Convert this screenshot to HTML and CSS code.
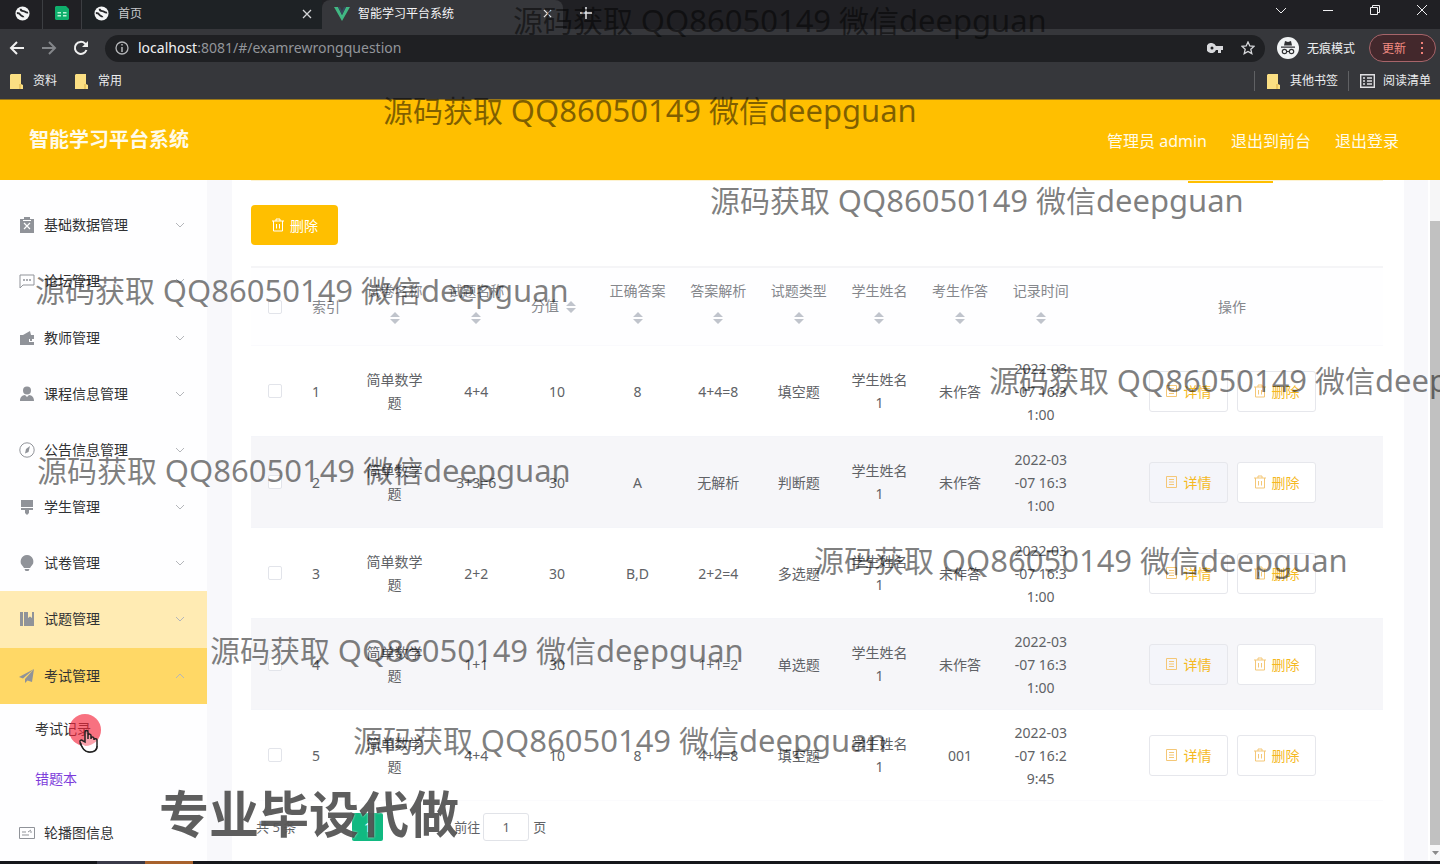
FILE: index.html
```html
<!DOCTYPE html>
<html lang="zh-CN">
<head>
<meta charset="utf-8">
<title>智能学习平台系统</title>
<link rel="stylesheet" href="styles.css">
</head>
<body>
<svg class="defs" aria-hidden="true">
  <symbol id="globe" viewBox="0 0 16 16"><circle cx="8" cy="8" r="7.500" fill="#f4f5f6"/><path d="M2 7.500c2 0 3 .5 4 2s3 1 3 2.500M6 3c0 2 1 2.500 3 2.500s2 2 5 1.500" fill="none" stroke="#28292c" stroke-width="2"/></symbol>
  <symbol id="folder" viewBox="0 0 13 15"><path d="M1 0h10v10l2 1v4H0V1z" fill="#fbdf83"/><path d="M10 10v5" stroke="#d9ad41"/></symbol>
  <symbol id="trash" viewBox="0 0 14 14"><path d="M1 3h12M5 3V1h4v2M2.500 3v10h9V3M5.500 6v4.500M8.500 6v4.500" fill="none" stroke="currentColor"/></symbol>
  <symbol id="doc" viewBox="0 0 14 14"><path d="M1.500 1.500h10v11h-10zM4 4.500h5M4 7h5M4 9.500h5" fill="none" stroke="currentColor"/></symbol>
  <symbol id="down" viewBox="0 0 10 10"><path d="M1 3l4 4 4-4" fill="none" stroke="currentColor"/></symbol>
  <symbol id="sort" viewBox="0 0 10 12"><path d="M0 5l5-5 5 5zM0 7l5 5 5-5z" fill="#c0c4cc"/></symbol>
</svg>

<div class="browser">
  <div class="tabs">
    <div class="pinned"><svg width="15" height="15"><use href="#globe"/></svg></div>
    <div class="pinned"><svg width="14" height="14" viewBox="0 0 14 14"><path d="M1 0h10l3 3v10l-1 1H1L0 13V1z" fill="#0fae6c"/><path d="M2.500 6h3.500v1.500H2.500zM8 6h3.500v1.500H8zM2.500 9h3.500v1.500H2.500zM8 9h3.500v1.500H8z" fill="#b9f3d6"/></svg></div>
    <div class="tab"><svg width="15" height="15"><use href="#globe"/></svg><span>首页</span><button class="plain" aria-label="关闭首页"><svg width="10" height="10" viewBox="0 0 10 10"><path d="M1 1l8 8M9 1L1 9" stroke="#d5d6d8" stroke-width="1.300"/></svg></button></div>
    <div class="tab current"><svg width="16" height="14" viewBox="0 0 16 14"><path d="M0 0h4l4 8 4-8h4L8 14z" fill="#41b883"/><path d="M4 0h2l2 4 2-4h2L8 8z" fill="#35495e"/></svg><span>智能学习平台系统</span><button class="plain" aria-label="关闭标签"><svg width="9" height="9" viewBox="0 0 10 10"><path d="M1 1l8 8M9 1L1 9" stroke="#e8e8ea" stroke-width="1.300"/></svg></button></div>
    <button class="plain add" aria-label="新标签"><svg width="12" height="12" viewBox="0 0 12 12"><path d="M6 0v12M0 6h12" stroke="#e8e8ea" stroke-width="1.500"/></svg></button>
    <div class="window">
      <svg width="12" height="12" viewBox="0 0 12 12"><path d="M1 4l5 5 5-5"/></svg>
      <svg width="12" height="12" viewBox="0 0 12 12"><path d="M1 6.500h10"/></svg>
      <svg width="12" height="12" viewBox="0 0 12 12"><path d="M1.500 3.500h7v7h-7zM3.500 3.500v-2h7v7h-2"/></svg>
      <svg width="12" height="12" viewBox="0 0 12 12"><path d="M1 1l10 10M11 1L1 11"/></svg>
    </div>
  </div>
  <div class="toolbar">
    <button class="plain" aria-label="后退"><svg width="16" height="14" viewBox="0 0 16 14"><path d="M8 1L2 7l6 6M2 7h13" fill="none" stroke="#f0f0f0" stroke-width="2"/></svg></button>
    <button class="plain" aria-label="前进"><svg width="16" height="14" viewBox="0 0 16 14"><path d="M8 1l6 6-6 6M14 7H1" fill="none" stroke="#84868a" stroke-width="2"/></svg></button>
    <button class="plain" aria-label="刷新"><svg width="16" height="16" viewBox="0 0 16 16"><path d="M13.500 10A6 6 0 1 1 12 3.500L14 5.500" fill="none" stroke="#f0f0f0" stroke-width="2"/><path d="M15 1v6H9z" fill="#f0f0f0"/></svg></button>
    <div class="address">
      <svg width="14" height="14" viewBox="0 0 14 14"><circle cx="7" cy="7" r="6" fill="none" stroke="#b5b6b9" stroke-width="1.300"/><path d="M7 6v5M7 3v1.500" stroke="#b5b6b9" stroke-width="1.500"/></svg>
      <span class="url"><b>localhost</b>:8081/#/examrewrongquestion</span>
      <svg width="16" height="10" viewBox="0 0 16 10"><path d="M5 0a5 5 0 1 0 4 7h2v3h3V7h2V3H9A5 5 0 0 0 5 0zm0 3.500a1.500 1.500 0 1 1 0 3 1.500 1.500 0 0 1 0-3z" fill="#d8d9dc"/></svg>
      <svg width="14" height="14" viewBox="0 0 14 14"><path d="M7 1l1.800 4 4.200.4-3.200 2.900 1 4.300L7 10.400l-3.800 2.200 1-4.300L1 5.400 5.200 5z" fill="none" stroke="#d8d9dc" stroke-width="1.300"/></svg>
    </div>
    <div class="incognito"><svg width="22" height="22" viewBox="0 0 22 22"><circle cx="11" cy="11" r="11" fill="#f1f3f4"/><path d="M7 8.500L8 4l3 1 3-1 1 4.500zM4 9.500h14v1.200H4z" fill="#303134"/><path d="M9.500 14.500h3" stroke="#303134"/><circle cx="7.500" cy="14.500" r="2.200" fill="none" stroke="#303134" stroke-width="1.200"/><circle cx="14.500" cy="14.500" r="2.200" fill="none" stroke="#303134" stroke-width="1.200"/></svg><span>无痕模式</span></div>
    <button class="update">更新<svg width="4" height="14" viewBox="0 0 4 14"><path d="M1 1h2v2H1zM1 6h2v2H1zM1 11h2v2H1z" fill="#f08078"/></svg></button>
  </div>
  <div class="bookmarks">
    <a href="#"><svg width="13" height="15"><use href="#folder"/></svg>资料</a>
    <a href="#"><svg width="13" height="15"><use href="#folder"/></svg>常用</a>
    <a href="#" class="others"><svg width="13" height="15"><use href="#folder"/></svg>其他书签</a>
    <a href="#" class="reading"><svg width="15" height="14" viewBox="0 0 15 14"><path d="M.7.700h13.600v12.600H.7zM3 4h2M3 7h2M3 10h2M7 4h5M7 7h5M7 10h5" fill="none" stroke="#e0e0e3" stroke-width="1.400"/></svg>阅读清单</a>
  </div>
</div>

<header class="header">
  <h1>智能学习平台系统</h1>
  <span>管理员 admin</span>
  <a href="#">退出到前台</a>
  <a href="#">退出登录</a>
</header>

<div class="app">
  <nav class="side">
    <ul class="groups">
      <li><svg viewBox="0 0 16 16"><path d="M1 2h14v14H1zM5 0h6v3H5z" fill="#909399"/><path d="M4 3.500h8M5 6l6 6M11 6l-6 6" stroke="#fff" stroke-width="1.200"/></svg><a href="#">基础数据管理</a><svg class="arrow"><use href="#down"/></svg></li>
      <li><svg viewBox="0 0 16 16"><path d="M1 2h14v10H4l-3 3z" fill="none" stroke="#909399"/><path d="M4 7h2M7 7h2M10 7h2" stroke="#909399" stroke-width="1.500"/></svg><a href="#">论坛管理</a><svg class="arrow"><use href="#down"/></svg></li>
      <li><svg viewBox="0 0 16 16"><path d="M1 5h3l7-4 1 4h3v4h-5v3h5v3H1z" fill="#909399"/><path d="M11 10h2" stroke="#909399" stroke-width="2"/></svg><a href="#">教师管理</a><svg class="arrow"><use href="#down"/></svg></li>
      <li><svg viewBox="0 0 16 16"><circle cx="8" cy="4.500" r="4" fill="#909399"/><path d="M1 15c0-4 2-5.500 5-6l2 2 2-2c3 .5 5 2 5 6z" fill="#909399"/></svg><a href="#">课程信息管理</a><svg class="arrow"><use href="#down"/></svg></li>
      <li><svg viewBox="0 0 16 16"><circle cx="8" cy="8" r="7.200" fill="none" stroke="#909399"/><path d="M11 4L9.500 10 6 11.500 7 7z" fill="#909399"/></svg><a href="#">公告信息管理</a><svg class="arrow"><use href="#down"/></svg></li>
      <li><svg viewBox="0 0 16 16"><path d="M2 1h12v7H2zM2 9h12v2h-4v3l-2 2-2-2v-3H2z" fill="#909399"/></svg><a href="#">学生管理</a><svg class="arrow"><use href="#down"/></svg></li>
      <li><svg viewBox="0 0 16 16"><path d="M8 0a6.500 6.500 0 0 1 4 11.500L11 13H5l-1-1.500A6.500 6.500 0 0 1 8 0zM5.500 14h5l-1 2h-3z" fill="#909399"/></svg><a href="#">试卷管理</a><svg class="arrow"><use href="#down"/></svg></li>
      <li class="hover"><svg viewBox="0 0 16 16"><path d="M1 1h3v14H1zM5 1h4v6l2-1.500L13 7V1h2v14H5z" fill="#909399"/></svg><a href="#">试题管理</a><svg class="arrow"><use href="#down"/></svg></li>
      <li class="open"><svg viewBox="0 0 16 16"><path d="M15 1L0 9l4 1.500zM15 1L6 11v4l2.500-2.500L13 14z" fill="#909399"/></svg><a href="#">考试管理</a><svg class="arrow up"><use href="#down"/></svg></li>
    </ul>
    <ul class="sub">
      <li><a href="#">考试记录</a></li>
      <li><a href="#" class="chosen">错题本</a></li>
    </ul>
    <ul class="tail">
      <li><svg viewBox="0 0 16 16"><path d="M.5 2.500h15v11H.5zM3 7h4M3 10h7M9 7l3-2M11 7h2" fill="none" stroke="#909399"/></svg><a href="#">轮播图信息</a></li>
    </ul>
  </nav>

  <main class="main">
    <div class="peek"><i></i></div>
    <button class="delete"><svg width="14" height="14"><use href="#trash"/></svg>删除</button>
    <table class="grid">
      <colgroup><col class="c-check"><col class="c-index"><col class="c-name"><col><col><col><col><col><col><col><col><col class="c-action"></colgroup>
      <thead><tr>
        <th><input type="checkbox" aria-label="全选"></th><th class="left">索引</th>
        <th>试卷名称<span class="sort"><svg><use href="#sort"/></svg></span></th>
        <th>试题名称<span class="sort"><svg><use href="#sort"/></svg></span></th>
        <th>分值<span class="sort"><svg><use href="#sort"/></svg></span></th>
        <th>正确答案<span class="sort"><svg><use href="#sort"/></svg></span></th>
        <th>答案解析<span class="sort"><svg><use href="#sort"/></svg></span></th>
        <th>试题类型<span class="sort"><svg><use href="#sort"/></svg></span></th>
        <th>学生姓名<span class="sort"><svg><use href="#sort"/></svg></span></th>
        <th>考生作答<span class="sort"><svg><use href="#sort"/></svg></span></th>
        <th>记录时间<span class="sort"><svg><use href="#sort"/></svg></span></th>
        <th>操作</th>
      </tr></thead>
      <tbody>
        <tr><td><input type="checkbox" aria-label="选择 1"></td><td class="left">1</td><td>简单数学题</td><td>4+4</td><td>10</td><td>8</td><td>4+4=8</td><td>填空题</td><td>学生姓名1</td><td>未作答</td><td>2022-03-07 16:31:00</td><td><div class="ops"><button><svg width="14" height="14"><use href="#doc"/></svg>详情</button><button><svg width="14" height="14"><use href="#trash"/></svg>删除</button></div></td></tr>
        <tr><td><input type="checkbox" aria-label="选择 2"></td><td class="left">2</td><td>简单数学题</td><td>3+3=6</td><td>30</td><td>A</td><td>无解析</td><td>判断题</td><td>学生姓名1</td><td>未作答</td><td>2022-03-07 16:31:00</td><td><div class="ops"><button><svg width="14" height="14"><use href="#doc"/></svg>详情</button><button><svg width="14" height="14"><use href="#trash"/></svg>删除</button></div></td></tr>
        <tr><td><input type="checkbox" aria-label="选择 3"></td><td class="left">3</td><td>简单数学题</td><td>2+2</td><td>30</td><td>B,D</td><td>2+2=4</td><td>多选题</td><td>学生姓名1</td><td>未作答</td><td>2022-03-07 16:31:00</td><td><div class="ops"><button><svg width="14" height="14"><use href="#doc"/></svg>详情</button><button><svg width="14" height="14"><use href="#trash"/></svg>删除</button></div></td></tr>
        <tr><td><input type="checkbox" aria-label="选择 4"></td><td class="left">4</td><td>简单数学题</td><td>1+1</td><td>30</td><td>B</td><td>1+1=2</td><td>单选题</td><td>学生姓名1</td><td>未作答</td><td>2022-03-07 16:31:00</td><td><div class="ops"><button><svg width="14" height="14"><use href="#doc"/></svg>详情</button><button><svg width="14" height="14"><use href="#trash"/></svg>删除</button></div></td></tr>
        <tr><td><input type="checkbox" aria-label="选择 5"></td><td class="left">5</td><td>简单数学题</td><td>4+4</td><td>10</td><td>8</td><td>4+4=8</td><td>填空题</td><td>学生姓名1</td><td>001</td><td>2022-03-07 16:29:45</td><td><div class="ops"><button><svg width="14" height="14"><use href="#doc"/></svg>详情</button><button><svg width="14" height="14"><use href="#trash"/></svg>删除</button></div></td></tr>
      </tbody>
    </table>
    <div class="pager">
      <span class="total">共 5 条</span>
      <button class="page">1</button>
      <label for="goto">前往</label><input id="goto" type="text" value="1"><span>页</span>
    </div>
  </main>
  <div class="scroll"><div class="thumb"></div><svg width="10" height="16" viewBox="0 0 10 16"><path d="M2 6h7l-3.500 4z" fill="#8a8a8a"/></svg></div>
</div>
<div class="taskbar"><i class="t1"></i><i class="t2"></i></div>

<div class="marks">
  <p class="m1">源码获取 <span>QQ86050149</span> 微信<span>deepguan</span></p>
  <p class="m2">源码获取 <span>QQ86050149</span> 微信<span>deepguan</span></p>
  <p class="m3">源码获取 <span>QQ86050149</span> 微信<span>deepguan</span></p>
  <p class="m4">源码获取 <span>QQ86050149</span> 微信<span>deepguan</span></p>
  <p class="m5">源码获取 <span>QQ86050149</span> 微信<span>deepguan</span></p>
  <p class="m6">源码获取 <span>QQ86050149</span> 微信<span>deepguan</span></p>
  <p class="m7">源码获取 <span>QQ86050149</span> 微信<span>deepguan</span></p>
  <p class="m8">源码获取 <span>QQ86050149</span> 微信<span>deepguan</span></p>
  <p class="m9">源码获取 <span>QQ86050149</span> 微信<span>deepguan</span></p>
  <strong class="slogan">专业毕设代做</strong>
  <svg class="pointer" width="34" height="42" viewBox="0 0 34 42"><circle cx="17" cy="17" r="16" fill="#f5253c" fill-opacity=".65"/><path d="M17 29V19c0-2 3-2 3 0v7-4c1-1.500 3-1 3 .5V26c0-3 3-2.500 3 0v1c0-2 3-1.500 3 0v6c0 4-3 6-7 6s-6-3-8-6l-2-4c-.5-2 1.500-2.500 3-1z" fill="#fff" fill-opacity=".35" stroke="#222" stroke-width="1.500"/><path d="M13.500 31c1 4 4 8 8 8s7-2 7.500-6c-4 2-9 2-15.500-2z" fill="#fff"/><path d="M12 30c2 4 4 9 9.500 9s7.500-3 7.500-6" fill="none" stroke="#222" stroke-width="1.500"/></svg>
</div>
</body>
</html>
```
FILE: styles.css
```css
* { box-sizing: border-box; }
html, body { height: 100%; }
body {
  margin: 0;
  display: flex;
  flex-direction: column;
  position: relative;
  overflow: hidden;
  font-family: "Noto Sans", "Noto Sans CJK SC", sans-serif;
  font-size: 14px;
  color: #606266;
  background: #fff;
}
a { color: inherit; text-decoration: none; }
ul { list-style: none; margin: 0; padding: 0; }
svg { flex: none; display: block; }
button { font: inherit; cursor: pointer; }
.defs { position: absolute; width: 0; height: 0; }
.plain { display: flex; padding: 0; border: 0; background: none; }

/* browser frame */
.browser { flex: none; font-size: 12px; color: #eceef0; background: #36373b; border-bottom: 1px solid #9a7718; }
.tabs { display: flex; height: 29px; line-height: 28px; background: #202024; }
.pinned { display: flex; align-items: center; justify-content: center; width: 39px; padding-bottom: 3px; border-right: 1px solid #3c3e42; }
.pinned:first-child { width: 43px; padding-left: 3px; }
.tab { display: flex; align-items: center; gap: 9px; width: 240px; padding: 0 10px 2px 12px; color: #c7c9cc; background: #1e2225; }
.tab span { flex: 1; }
.tab.current { width: 241px; padding-right: 11px; gap: 8px; color: #f5f5f7; background: #36373b; border-radius: 8px 8px 0 0; }
.add { padding: 7px 0 0 17px; }
.window { display: flex; gap: 35px; margin-left: auto; padding: 4px 12px 0 0; }
.window path { fill: none; stroke: #f0f0f2; stroke-width: 1; }
.toolbar { display: flex; align-items: center; height: 38px; padding: 0 4px 0 9px; }
.toolbar > .plain { width: 32px; }
.address { display: flex; align-items: center; flex: 1; gap: 18px; height: 27px; padding: 0 10px; border-radius: 14px; background: #1f2023; }
.url { flex: 1; margin-left: -9px; font-size: 14px; line-height: 24px; color: #92959a; }
.url b { font-weight: 400; color: #f2f2f4; }
.incognito { display: flex; align-items: center; gap: 8px; width: 92px; height: 27px; margin-left: 12px; white-space: nowrap; }
.update { display: flex; align-items: center; gap: 14px; height: 28px; width: 67px; padding: 0 10px 0 12px; color: #f28b82; background: #43282c; border: 1px solid #a7656a; border-radius: 14px; white-space: nowrap; }
.bookmarks { display: flex; align-items: center; height: 32px; padding: 0 9px 4px 10px; gap: 18px; line-height: 20px; }
.bookmarks a { display: flex; align-items: center; gap: 10px; }
.bookmarks .others { margin-left: auto; padding-left: 12px; border-left: 1px solid #606164; }
.bookmarks .reading { margin-left: -8px; padding-left: 11px; border-left: 1px solid #606164; gap: 8px; }

/* application header */
.header { display: flex; align-items: center; flex: none; gap: 24px; height: 80px; padding: 0 41px 0 29px; font-size: 16px; color: #fffbe9; background: #ffbf00; }
.header h1 { flex: 1; margin: 0; font-size: 20px; line-height: 28px; font-weight: 700; }

.app { display: flex; flex: 1; min-height: 0; overflow: hidden; }

/* side menu */
.side { flex: none; width: 207px; padding-top: 17px; color: #303133; background: #fefeff; }
.groups { display: grid; grid-auto-rows: 1fr; height: 507px; }
.groups li, .tail li { display: flex; align-items: center; gap: 9px; padding: 0 22px 0 19px; }
.side li > svg { width: 16px; height: 16px; }
.side li a { flex: 1; line-height: 24px; }
.side li .arrow { width: 10px; height: 10px; color: #b4b6ba; }
.side li .up { transform: rotate(180deg); }
.side .hover { background: #ffebb3; }
.side .open { background: #ffd866; }
.sub li { display: flex; align-items: center; height: 50px; padding-left: 35px; }
.sub .chosen { color: #7d3cdb; }
.tail li { height: 58px; }

/* content */
.main { flex: 1; min-width: 0; padding: 0 21px 0 19px; border-left: 25px solid #f8f8fb; border-right: 24px solid #f8f8fb; background: #fff; }
.peek { display: flex; justify-content: flex-end; height: 25px; padding-right: 110px; border-top: 1px solid #fdf3d2; }
.peek i { width: 85px; height: 2px; background: #ffbf00; }
.delete { display: flex; align-items: center; gap: 5px; height: 40px; padding: 0 20px; border: 0; border-radius: 4px; color: #fff; background: #ffbf00; }
.grid { width: 100%; margin-top: 21px; table-layout: fixed; border-collapse: separate; border-spacing: 0; line-height: 23px; text-align: center; }
.c-check { width: 50px; }
.c-index { width: 52px; }
.c-name { width: 83px; }
.c-action { width: 302px; }
.grid th, .grid td { padding: 10px 12px; word-break: break-all; }
.grid th { height: 80px; font-weight: 400; color: #85878c; background: #fefeff; border-top: 2px solid #f5f5f7; border-bottom: 1px solid #fafafd; }
.grid td { height: 91px; border-bottom: 1px solid #f4f5f9; }
.grid tbody tr:last-child td { border-bottom-color: #fbfbfd; }
.grid .left { padding-left: 11px; padding-right: 0; text-align: left; }
.grid tbody tr:nth-child(even) { background: #f6f6f9; }
.sort { display: inline-flex; align-items: center; justify-content: center; width: 24px; height: 32px; vertical-align: middle; }
.sort svg { width: 10px; height: 12px; }
.grid input { appearance: none; display: block; width: 14px; height: 14px; margin: 0 0 0 5px; border: 1px solid #e2e4ea; border-radius: 2px; background: #fff; }
.ops { display: flex; justify-content: center; gap: 9px; }
.ops button { display: flex; align-items: center; gap: 5px; height: 41px; padding: 0 15px; color: #f5b91f; background: #fff; border: 1px solid #e6e7ec; border-radius: 3px; }
.ops svg { color: #f4c777; }
.grid tbody tr:nth-child(even) button:first-child { background: #f4f5fa; }
.pager { display: flex; align-items: center; margin-top: 12px; padding-left: 5px; font-size: 13px; line-height: 28px; }
.page { width: 31px; height: 28px; margin: 0 71px 0 56px; padding: 0; color: #fff; background: #11b981; border: 0; border-radius: 2px; }
.pager input { width: 46px; height: 28px; margin: 0 4px 0 3px; padding: 0; font: inherit; color: inherit; text-align: center; border: 1px solid #e1e3e8; border-radius: 3px; }
.scroll { display: flex; flex-direction: column; flex: none; width: 12px; padding-top: 41px; border-left: 2px solid #fff; background: #f6f6f7; }
.thumb { flex: 1; background: #c1c1c1; }
.taskbar { display: flex; flex: none; height: 3px; padding-left: 97px; background: #16171b; }
.t1 { width: 48px; background: #3a3a48; }
.t2 { width: 48px; background: #a8622c; }

/* floating marks drawn over the whole screen */
.marks { position: absolute; inset: 0; overflow: hidden; pointer-events: none; }
.marks p { position: absolute; margin: 0; font-size: 30px; line-height: 40px; white-space: nowrap; color: rgba(0, 0, 0, .5); }
.marks p span { font-size: 31px; }
.m1 { left: 513px; top: 0; }
.m2 { left: 383px; top: 90px; }
.m3 { left: 710px; top: 180px; }
.m4 { left: 35px; top: 270px; }
.m5 { left: 989px; top: 360px; }
.m6 { left: 37px; top: 450px; }
.m7 { left: 814px; top: 540px; }
.m8 { left: 210px; top: 630px; }
.m9 { left: 353px; top: 720px; }
.slogan { position: absolute; left: 159px; top: 779px; font-size: 50px; line-height: 70px; font-weight: 700; color: rgba(40, 40, 40, .75); text-shadow: 0 0 2px rgba(255, 255, 255, .8); white-space: nowrap; }
.pointer { position: absolute; left: 68px; top: 713px; }
```
